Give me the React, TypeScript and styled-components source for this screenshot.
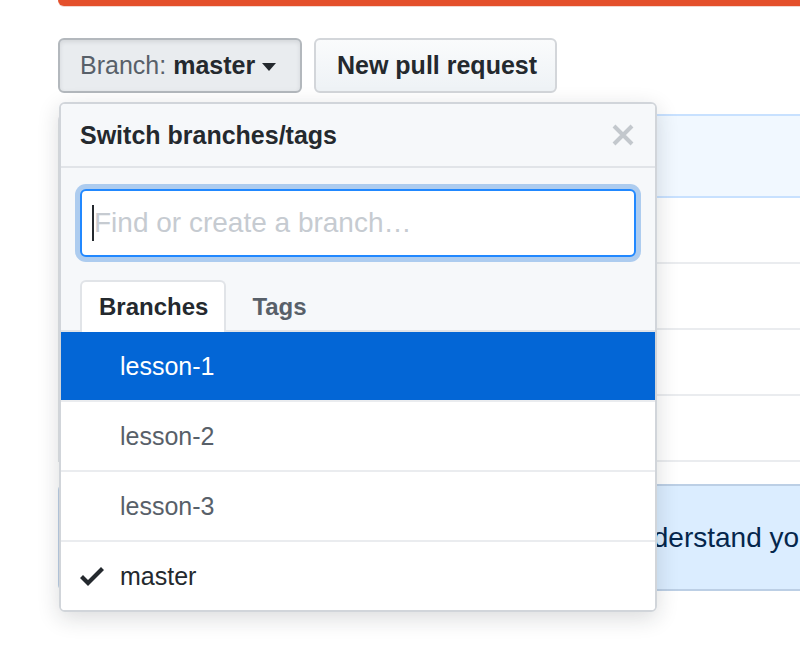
import React from "react";
import styled, { createGlobalStyle } from "styled-components";

const GlobalStyle = createGlobalStyle`
	html, body {
		margin: 0;
		padding: 0;
		background: #fff;
		overflow: hidden;
	}
	body {
		font-family: "Liberation Sans", Arial, sans-serif;
		color: #24292e;
	}
`;

const branches = [
	{ name: "lesson-1", selected: true, current: false },
	{ name: "lesson-2", selected: false, current: false },
	{ name: "lesson-3", selected: false, current: false },
	{ name: "master", selected: false, current: true },
];

const CheckIcon: React.FC = () => (
	<svg width="24" height="32" viewBox="0 0 12 16" aria-hidden="true">
		<path fill="#24292e" d="M12 5l-8 8-4-4 1.5-1.5L4 10l6.5-6.5L12 5z" />
	</svg>
);

const CloseIcon: React.FC = () => (
	<svg width="22" height="22" viewBox="0 0 22 22" aria-hidden="true">
		<path
			d="M2 2L20 20M20 2L2 20"
			stroke="#c3c8cd"
			strokeWidth="4"
			strokeLinecap="butt"
		/>
	</svg>
);

const App: React.FC = () => {
	return (
		<Page>
			<GlobalStyle />
			<TopBar />
			<Repo>
				<ButtonRow>
					<BranchButton>
						Branch: <strong>master</strong>
						<Caret />
					</BranchButton>
					<PrButton>New pull request</PrButton>
				</ButtonRow>

				{/* branch selector menu */}
				<Dropdown>
					<MenuHeader>
						<MenuTitle>Switch branches/tags</MenuTitle>
						<CloseIcon />
					</MenuHeader>
					<FilterArea>
						<InputWrap>
							<FilterInput placeholder="Find or create a branch…" readOnly />
						</InputWrap>
						<TabBar>
							<Tab active>Branches</Tab>
							<Tab>Tags</Tab>
						</TabBar>
					</FilterArea>
					<ItemList>
						{branches.map((b) => (
							<Item key={b.name} selected={b.selected} current={b.current}>
								<CheckSlot>{b.current && <CheckIcon />}</CheckSlot>
								{b.name}
							</Item>
						))}
					</ItemList>
				</Dropdown>

				{/* file list behind the menu */}
				<FileTable>
					<CommitTease />
					<FileRow />
					<FileRow />
					<FileRow />
					<FileRow />
				</FileTable>
				<ReadmeHint>
					Help people interested in this repository understand your project by
					adding a README.
				</ReadmeHint>
			</Repo>
		</Page>
	);
};

const Page = styled.div`
	width: 800px;
	height: 646px;
	padding-left: 58px;
	box-sizing: border-box;
	overflow: hidden;
`;

const TopBar = styled.div`
	height: 6px;
	width: 800px;
	background: #e4502b;
	border-bottom-left-radius: 6px;
	box-shadow: 0 1px 0 #f3d7cf;
`;

const Repo = styled.div`
	position: relative;
	width: 800px;
	padding-top: 32px;
`;

const ButtonRow = styled.div`
	display: flex;
	gap: 12px;
	height: 55px;
`;

const BaseButton = styled.div`
	display: flex;
	align-items: center;
	box-sizing: border-box;
	height: 55px;
	border-radius: 6px;
	font-size: 25px;
	white-space: nowrap;
`;

const BranchButton = styled(BaseButton)`
	padding: 0 20px;
	width: 244px;
	color: #586069;
	background: #e9ecef;
	border: 2px solid #b3b8bd;
	box-shadow: inset 0 2px 4px rgba(27, 31, 35, 0.1);

	strong {
		color: #24292e;
		margin-left: 7px;
	}
`;

const Caret = styled.span`
	display: inline-block;
	margin-left: 7px;
	margin-top: 2px;
	border-top: 8px solid #24292e;
	border-left: 7px solid transparent;
	border-right: 7px solid transparent;
`;

const PrButton = styled(BaseButton)`
	padding: 0 21px;
	width: 243px;
	font-weight: bold;
	color: #24292e;
	background: linear-gradient(#fafbfc, #eff3f6 90%);
	border: 2px solid #d3d6da;
`;

const Dropdown = styled.div`
	position: absolute;
	top: 96px;
	left: 1px;
	z-index: 10;
	width: 598px;
	box-sizing: border-box;
	background: #fff;
	border: 2px solid #d1d5da;
	border-radius: 6px;
	box-shadow: 0 6px 22px rgba(27, 31, 35, 0.16);
	overflow: hidden;
`;

const MenuHeader = styled.div`
	display: flex;
	align-items: center;
	justify-content: space-between;
	height: 62px;
	padding: 0 21px 0 19px;
	background: #f6f8fa;
	border-bottom: 2px solid #e1e4e8;
`;

const MenuTitle = styled.div`
	font-size: 25px;
	font-weight: bold;
	color: #24292e;
`;

const FilterArea = styled.div`
	background: #f6f8fa;
	padding: 21px 0 0;
`;

const InputWrap = styled.div`
	position: relative;
	margin: 0 19px;

	&::before {
		content: "";
		position: absolute;
		left: 12px;
		top: 16px;
		width: 2px;
		height: 36px;
		background: #24292e;
	}
`;

const FilterInput = styled.input`
	display: block;
	width: 100%;
	height: 68px;
	box-sizing: border-box;
	padding: 0 12px;
	font-family: "Liberation Sans", Arial, sans-serif;
	font-size: 28px;
	color: #24292e;
	background: #fff;
	border: 2px solid #2188ff;
	border-radius: 6px;
	outline: none;
	box-shadow: 0 0 0 5px rgba(3, 102, 214, 0.3);

	&::placeholder {
		color: #c6cbd1;
	}
`;

const TabBar = styled.div`
	display: flex;
	gap: 7px;
	margin-top: 23px;
	padding-left: 19px;
	height: 50px;
	border-bottom: 2px solid #e1e4e8;
`;

const Tab = styled.div<{ active?: boolean }>`
	display: flex;
	align-items: center;
	box-sizing: border-box;
	height: 52px;
	padding: 0 16px 0 17px;
	font-size: 24px;
	font-weight: bold;
	color: ${(p) => (p.active ? "#24292e" : "#586069")};
	background: ${(p) => (p.active ? "#fff" : "transparent")};
	border: 2px solid ${(p) => (p.active ? "#e1e4e8" : "transparent")};
	border-bottom: none;
	border-radius: 6px 6px 0 0;
`;

const ItemList = styled.div`
	background: #fff;
`;

const Item = styled.div<{ selected: boolean; current: boolean }>`
	display: flex;
	align-items: center;
	height: 68px;
	padding-left: 19px;
	font-size: 25px;
	color: ${(p) => (p.selected ? "#fff" : p.current ? "#24292e" : "#586069")};
	background: ${(p) => (p.selected ? "#0366d6" : "#fff")};
	border-bottom: 2px solid #eaecef;

	&:last-child {
		border-bottom: none;
	}
`;

const CheckSlot = styled.span`
	display: flex;
	align-items: center;
	width: 40px;
	height: 32px;
`;

const FileTable = styled.div`
	margin-top: 21px;
	border-left: 2px solid #e1e4e8;
	border-top-left-radius: 6px;
`;

const CommitTease = styled.div`
	height: 80px;
	background: #f1f8ff;
	border: 2px solid #c8e1ff;
	border-right: none;
	border-top-left-radius: 6px;
`;

const FileRow = styled.div`
	height: 64px;
	border-bottom: 2px solid #eaecef;
`;

const ReadmeHint = styled.div`
	display: flex;
	align-items: center;
	margin-top: 22px;
	height: 103px;
	padding-left: 62px;
	font-size: 28px;
	color: #05264c;
	white-space: nowrap;
	background: #dbedff;
	border: 2px solid #bccfe5;
	border-right: none;
	border-radius: 6px 0 0 6px;
`;

export default App;
